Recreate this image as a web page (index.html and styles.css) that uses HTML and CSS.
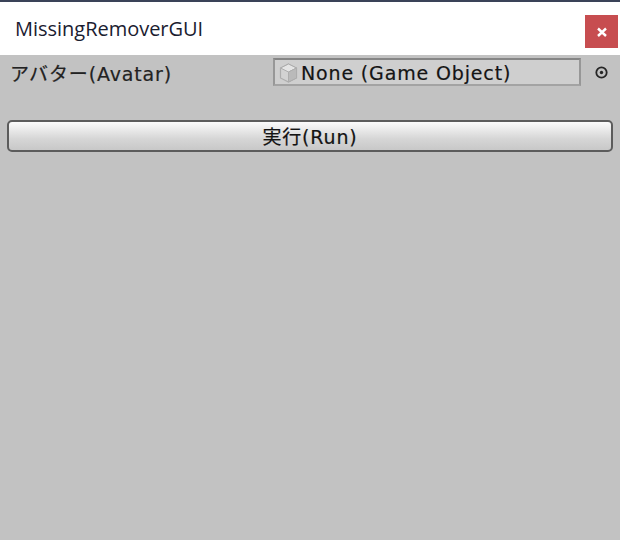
FILE: index.html
```html
<!DOCTYPE html>
<html lang="ja">
<head>
    <meta charset="UTF-8">
    <title>MissingRemoverGUI</title>
    <link rel="stylesheet" href="styles.css">
</head>
<body>
    <div class="window">
        <div class="titlebar">
            <span class="title">MissingRemoverGUI</span>
            <div class="close">
                <svg width="12" height="12" viewBox="0 0 12 12">
                    <path d="M2 2.5 L10 10 M10 2.5 L2 10" stroke="#fff" stroke-width="2.4" fill="none"/>
                </svg>
            </div>
        </div>
        <div class="content">
            <div class="row">
                <span class="label">アバター(Avatar)</span>
                <div class="field">
                    <svg class="cube" width="21" height="22" viewBox="0 0 20 22">
                        <path d="M10 2 L18 6 L18 16 L10 20 L2 16 L2 6 Z" fill="#d2d2d2" stroke="#adadad" stroke-width="1.2"/>
                        <path d="M2 6 L10 10 L18 6 L10 2 Z" fill="#e4e4e4" stroke="#adadad" stroke-width="1"/>
                        <path d="M10 10 L18 6 L18 16 L10 20 Z" fill="#bababa" stroke="#adadad" stroke-width="1"/>
                    </svg>
                    <span class="field-text">None (Game Object)</span>
                </div>
                <div class="picker">
                    <svg width="15" height="15" viewBox="0 0 15 15">
                        <circle cx="7.5" cy="7.5" r="5.2" fill="none" stroke="#262626" stroke-width="1.8"/>
                        <circle cx="7.5" cy="7.5" r="1.7" fill="#262626"/>
                    </svg>
                </div>
            </div>
            <button class="run">実行(Run)</button>
        </div>
    </div>
</body>
</html>
```
FILE: styles.css
```css
html, body {
    margin: 0;
    padding: 0;
    height: 100%;
    overflow: hidden;
}
.window {
    display: flex;
    flex-direction: column;
    height: 540px;
    background: #c2c2c2;
    border-top: 2px solid #3a4358;
    box-sizing: border-box;
}
.titlebar {
    display: flex;
    align-items: center;
    justify-content: space-between;
    height: 53px;
    padding: 0 2px 0 15px;
    background: #fff;
}
.title {
    font-family: "Open Sans", sans-serif;
    font-size: 20px;
    letter-spacing: -0.02px;
    color: #1a2030;
    margin-top: -1px;
}
.close {
    display: flex;
    align-items: center;
    justify-content: center;
    width: 33px;
    height: 33px;
    margin-top: 6px;
    background: #c74d50;
}
.content {
    padding: 3px 7px 0;
    font-family: "DejaVu Sans", "Noto Sans CJK JP", sans-serif;
    color: #141414;
    -webkit-text-stroke: 0.2px currentColor;
}
.row {
    display: flex;
    align-items: center;
    height: 28px;
}
.label {
    width: 266px;
    padding-left: 3px;
    box-sizing: border-box;
    font-size: 19px;
    letter-spacing: 0.85px;
    white-space: nowrap;
    color: #222;
}
.field {
    display: flex;
    align-items: center;
    width: 308px;
    height: 28px;
    box-sizing: border-box;
    padding-left: 3px;
    padding-top: 1px;
    background: #cfcfcf;
    border: 2px solid #858585;
    border-left-color: #979797;
    border-right-color: #979797;
    border-bottom-color: #a3a3a3;
}
.field-text {
    margin-left: 2px;
    font-size: 19px;
    letter-spacing: 0.85px;
    white-space: nowrap;
}
.picker {
    display: flex;
    margin-left: 13px;
}
.run {
    display: block;
    width: 606px;
    height: 32px;
    margin-top: 34px;
    padding: 0 0 2px;
    font-family: inherit;
    font-size: 19px;
    letter-spacing: 0.85px;
    color: #141414;
    background: linear-gradient(#fbfbfb, #d6d6d6 60%, #c8c8c8);
    border: 2px solid #5c5c5c;
    border-radius: 5px;
}
```
